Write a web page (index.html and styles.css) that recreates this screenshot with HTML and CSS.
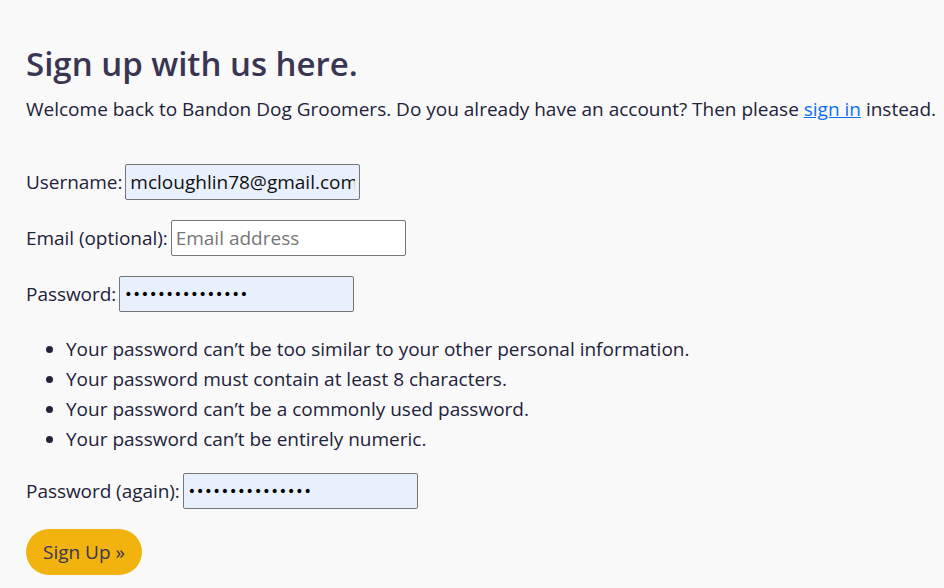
FILE: index.html
```html
<!DOCTYPE html>
<html lang="en">
<head>
<meta charset="utf-8">
<title>Sign up</title>
<link rel="stylesheet" href="styles.css">
</head>
<body>
<main class="page">
  <h1 class="title">Sign up with us here.</h1>
  <p class="intro">Welcome back to Bandon Dog Groomers. Do you already have an account? Then please <a href="#" class="link">sign in</a> instead.</p>
  <form class="form">
    <p class="row"><label class="label" for="u">Username:</label><input id="u" class="input filled" type="text" value="mcloughlin78@gmail.com"></p>
    <p class="row"><label class="label" for="e">Email (optional):</label><input id="e" class="input" type="email" placeholder="Email address"></p>
    <p class="row row-tight"><label class="label" for="p1">Password:</label><input id="p1" class="input filled pw" type="password" value="abcdefghijklmno"></p>
    <ul class="rules">
      <li>Your password can’t be too similar to your other personal information.</li>
      <li>Your password must contain at least 8 characters.</li>
      <li>Your password can’t be a commonly used password.</li>
      <li>Your password can’t be entirely numeric.</li>
    </ul>
    <p class="row"><label class="label" for="p2">Password (again):</label><input id="p2" class="input filled pw" type="password" value="abcdefghijklmno"></p>
    <button class="btn" type="button">Sign Up »</button>
  </form>
</main>
</body>
</html>
```
FILE: styles.css
```css
html, body {
  margin: 0;
  padding: 0;
  background: #f9f9f9;
}
body {
  font-family: "Open Sans", "Noto Sans", sans-serif;
  font-size: 19px;
  line-height: 30px;
  color: #22223a;
}
.page {
  padding: 40px 0 0 26px;
}
.title {
  margin: 0 0 6px 0;
  font-size: 33px;
  line-height: 48px;
  font-weight: 600;
  color: #3a3552;
}
.intro {
  margin: 0 0 40px 0;
}
.link {
  color: #0d6efd;
  text-decoration: underline;
}
.form {
  margin: 0;
}
.row {
  display: flex;
  align-items: center;
  margin: 0 0 20px 0;
  height: 36px;
}
.row-tight {
  margin-bottom: 22px;
}
.label {
  margin-right: 3px;
  letter-spacing: -0.05px;
}
.input {
  box-sizing: border-box;
  width: 235px;
  height: 36px;
  margin: 0;
  padding: 0 4px;
  border: 1px solid #767676;
  border-radius: 2px;
  background: #ffffff;
  font-family: inherit;
  font-size: 19px;
  color: #111;
}
.input::placeholder {
  color: #767676;
}
.filled {
  background: #e8f0fe;
}
.pw {
  font-family: "DejaVu Sans", sans-serif;
  font-size: 14px;
  letter-spacing: 0;
  color: #000;
}
.rules {
  margin: 0 0 19px 0;
  padding-left: 40px;
}
.btn {
  display: inline-block;
  height: 46px;
  padding: 0 17px;
  border: none;
  border-radius: 23px;
  background: #f2b30f;
  color: #3a3552;
  font-family: inherit;
  font-size: 19px;
  cursor: pointer;
}
```
